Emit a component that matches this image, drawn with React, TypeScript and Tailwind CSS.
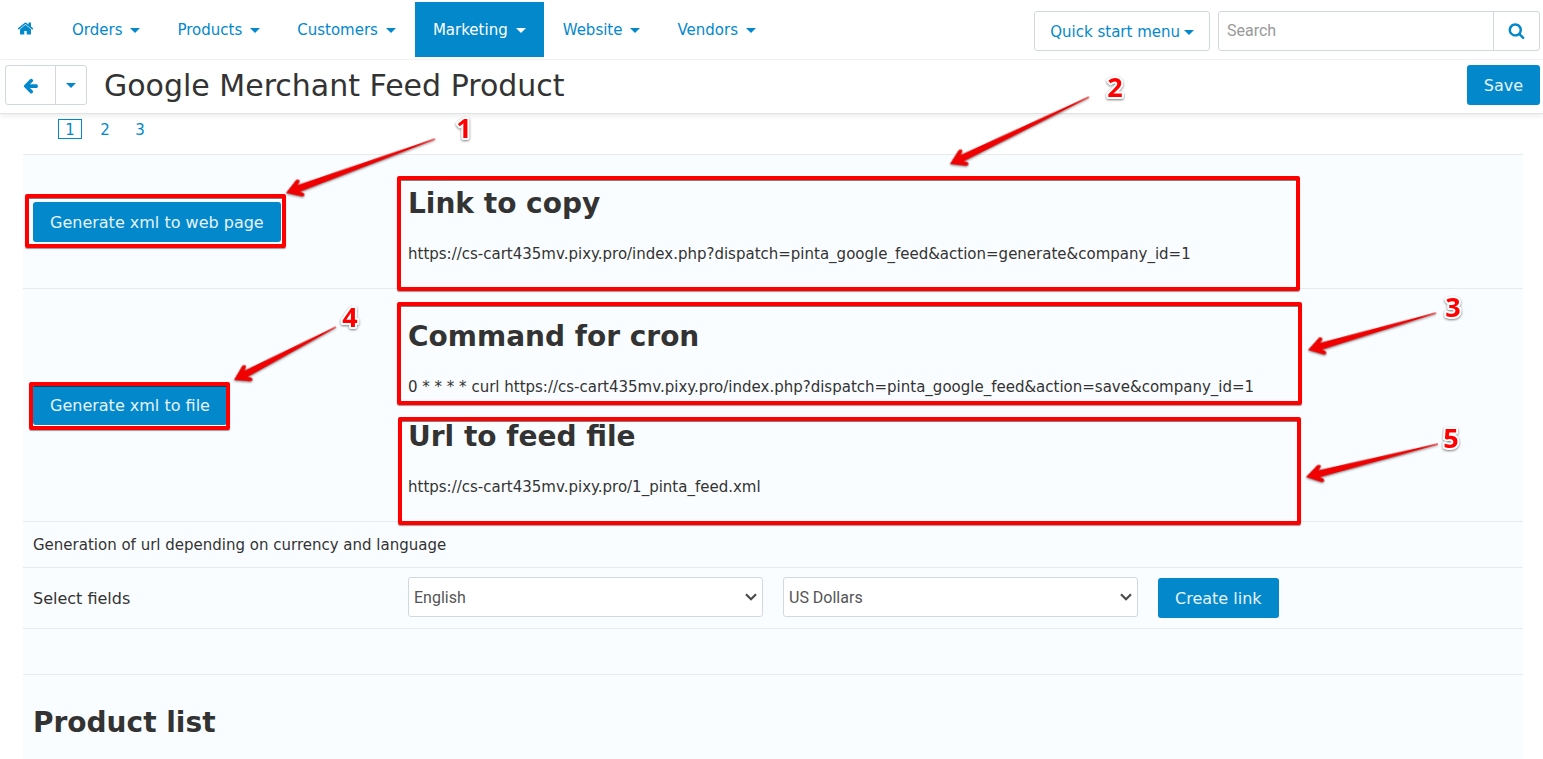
import type { ReactNode } from "react";

const ICONS = {
  home: "M1472 992v480q0 26-19 45t-45 19h-384v-384h-256v384h-384q-26 0-45-19t-19-45v-480q0-1 .5-3t.5-3l575-474 575 474q1 2 1 6zm223-69l-62 74q-8 9-21 11h-3q-13 0-21-7l-692-577-692 577q-12 8-24 7-13-2-21-11l-62-74q-8-10-7-23.5t11-21.5l719-599q32-26 76-26t76 26l244 204v-195q0-14 9-23t23-9h192q14 0 23 9t9 23v408l219 182q10 8 11 21.5t-7 23.5z",
  back: "M1664 896v128q0 53-32.5 90.5t-84.5 37.5h-704l293 294q38 36 38 90t-38 90l-75 76q-37 37-90 37-52 0-91-37l-651-652q-37-37-37-90 0-52 37-91l651-650q38-38 91-38 52 0 90 38l75 74q38 38 38 91t-38 91l-293 293h704q52 0 84.5 37.5t32.5 90.5z",
  search:
    "M1216 832q0-185-131.5-316.5t-316.5-131.5-316.5 131.5-131.5 316.5 131.5 316.5 316.5 131.5 316.5-131.5 131.5-316.5zm512 832q0 52-38 90t-90 38q-54 0-90-38l-343-342q-179 124-399 124-143 0-273.5-55.5t-225-150-150-225-55.5-273.5 55.5-273.5 150-225 225-150 273.5-55.5 273.5 55.5 225 150 150 225 55.5 273.5q0 220-124 399l343 343q37 37 37 90z",
};

function Icon({ d }: { d: string }) {
  return (
    <svg viewBox="0 0 1792 1792" className="size-[17px] fill-current" aria-hidden="true">
      <path d={d} />
    </svg>
  );
}

function Caret() {
  return (
    <svg viewBox="0 0 10 5" className="h-[5px] w-[10px] fill-current" aria-hidden="true">
      <path d="M0 0h10L5 5z" />
    </svg>
  );
}

const MENU = ["Orders", "Products", "Customers", "Marketing", "Website", "Vendors"];

function TopBar() {
  return (
    <header className="flex h-[60px] items-start justify-between border-b border-[#f2f4f5] pr-[3px]">
      <nav className="flex gap-px pt-[2px] text-[15px] text-[#0388cc]">
        <a href="#home" aria-label="Home" className="flex h-[55px] items-center pr-[19px] pb-[2px] pl-[17px]">
          <Icon d={ICONS.home} />
        </a>
        {MENU.map((item) => (
          <a
            key={item}
            href={"#" + item.toLowerCase()}
            className={
              item === "Marketing"
                ? "flex h-[55px] items-center gap-2 bg-[#0388cc] px-[18px] pt-[2px] text-white"
                : "flex h-[55px] items-center gap-2 px-[18px] pt-[2px]"
            }
          >
            {item}
            <Caret />
          </a>
        ))}
      </nav>
      <div className="flex gap-2 pt-[11px]">
        <button
          type="button"
          className="flex h-10 items-center gap-1 rounded-[3px] border border-[#d0d8e0] px-[15px] pt-[2px] text-[15px] text-[#0388cc]"
        >
          Quick start menu
          <Caret />
        </button>
        <form className="flex h-10 w-[322px] rounded-[3px] border border-[#d0d8e0]" role="search">
          <input
            type="search"
            aria-label="Search"
            placeholder="Search"
            className="min-w-0 flex-1 px-2 font-['Roboto',sans-serif] text-base outline-none placeholder:text-[#999999]"
          />
          <button
            type="button"
            aria-label="Submit search"
            className="flex w-[46px] items-center justify-center border-l border-[#d0d8e0] pb-[2px] text-[#0388cc]"
          >
            <Icon d={ICONS.search} />
          </button>
        </form>
      </div>
    </header>
  );
}

function PrimaryButton({ children }: { children: ReactNode }) {
  return (
    <button
      type="button"
      className="h-10 rounded-[3px] bg-[#0388cc] px-[17px] pt-[2px] text-base whitespace-nowrap text-[#e6f3fa]"
    >
      {children}
    </button>
  );
}

function TitleBar() {
  return (
    <div className="flex h-[54px] items-center justify-between border-b border-[#e0e3e3] pr-[3px] pb-[3px] pl-[5px] shadow-[0_2px_5px_rgba(0,0,0,0.08)]">
      <div className="flex items-center">
        <div className="flex h-10 rounded-[3px] border border-[#d0d8e0] text-[#0388cc]">
          <button type="button" aria-label="Back" className="flex w-[49px] items-center justify-center">
            <Icon d={ICONS.back} />
          </button>
          <button
            type="button"
            aria-label="More destinations"
            className="flex w-[31px] items-center justify-center border-l border-[#d0d8e0]"
          >
            <Caret />
          </button>
        </div>
        <h1 className="pt-[2px] pl-[17px] text-[30px] leading-10">Google Merchant Feed Product</h1>
      </div>
      <PrimaryButton>Save</PrimaryButton>
    </div>
  );
}

function SelectBox({ label, options }: { label: string; options: string[] }) {
  return (
    <div className="grid items-center pb-[2px]">
      <select
        aria-label={label}
        className="col-start-1 row-start-1 h-10 w-full appearance-none rounded-[3px] border border-[#d0d8e0] bg-white px-[5px] pt-[2px] font-['Roboto',sans-serif] text-base text-[#555555]"
      >
        {options.map((option) => (
          <option key={option}>{option}</option>
        ))}
      </select>
      <svg
        viewBox="0 0 12 8"
        className="pointer-events-none col-start-1 row-start-1 mr-[6px] h-2 w-3 justify-self-end"
        aria-hidden="true"
      >
        <path d="M1 1.2l5 5 5-5" fill="none" stroke="#4a4a4a" strokeWidth="2.2" />
      </svg>
    </div>
  );
}

function Snippet({ title, children }: { title: string; children: ReactNode }) {
  return (
    <section>
      <h2 className="text-[28px] leading-10 font-bold">{title}</h2>
      <p className="mt-5 text-[15px] leading-5 whitespace-nowrap">{children}</p>
    </section>
  );
}

function FeedTable() {
  return (
    <table className="w-full table-fixed border-collapse bg-[#fafdff] [&_td]:px-[10px] [&_tr]:border-t [&_tr]:border-[#e8ebed]">
      <tbody>
        <tr className="h-[134px]">
          <td>
            <PrimaryButton>Generate xml to web page</PrimaryButton>
          </td>
          <td colSpan={3}>
            <div className="pt-1">
              <Snippet title="Link to copy">
                https://cs-cart435mv.pixy.pro/index.php?dispatch=pinta_google_feed&amp;action=generate&amp;company_id=1
              </Snippet>
            </div>
          </td>
        </tr>
        <tr className="h-[233px]">
          <td>
            <PrimaryButton>Generate xml to file</PrimaryButton>
          </td>
          <td colSpan={3}>
            <div className="flex flex-col gap-5 pt-1">
              <Snippet title="Command for cron">
                0 * * * * curl https://cs-cart435mv.pixy.pro/index.php?dispatch=pinta_google_feed&amp;action=save&amp;company_id=1
              </Snippet>
              <Snippet title="Url to feed file">https://cs-cart435mv.pixy.pro/1_pinta_feed.xml</Snippet>
            </div>
          </td>
        </tr>
        <tr className="h-[46px]">
          <td colSpan={4} className="text-[15px] leading-5">
            Generation of url depending on currency and language
          </td>
        </tr>
        <tr className="h-[61px]">
          <td className="pt-[2px] text-base">Select fields</td>
          <td>
            <SelectBox label="Language" options={["English", "Russian"]} />
          </td>
          <td>
            <SelectBox label="Currency" options={["US Dollars", "Euro"]} />
          </td>
          <td>
            <PrimaryButton>Create link</PrimaryButton>
          </td>
        </tr>
        <tr className="h-[46px]">
          <td colSpan={4} />
        </tr>
        <tr className="h-[84px]">
          <td colSpan={4}>
            <h2 className="pt-3 text-[28px] leading-10 font-bold">Product list</h2>
          </td>
        </tr>
      </tbody>
    </table>
  );
}

const ARROWS = [
  { tip: [286, 193], tail: [435, 139] },
  { tip: [950, 164], tail: [1089, 97] },
  { tip: [1308, 350], tail: [1436, 313] },
  { tip: [234, 380], tail: [336, 327] },
  { tip: [1306, 477], tail: [1438, 444] },
];

const MARKS = [
  { text: "1", x: 464, y: 138 },
  { text: "2", x: 1115, y: 97 },
  { text: "3", x: 1453, y: 317 },
  { text: "4", x: 350, y: 327 },
  { text: "5", x: 1451, y: 448 },
];

const HIGHLIGHTS = [
  "left-[25px] top-[194px] w-[261px] h-[54px]",
  "left-[397px] top-[176px] w-[903px] h-[115px]",
  "left-[397px] top-[302px] w-[905px] h-[103px]",
  "left-[29px] top-[382px] w-[201px] h-[48px]",
  "left-[398px] top-[417px] w-[903px] h-[108px]",
];

function Annotations() {
  return (
    <div className="pointer-events-none absolute inset-0">
      {HIGHLIGHTS.map((place) => (
        <div
          key={place}
          className={
            "absolute rounded-[2px] border-4 border-[#ff0000] shadow-[0_1px_1px_rgba(0,0,0,0.4),inset_0_1px_0_rgba(0,0,0,0.5)] " +
            place
          }
        />
      ))}
      <svg className="absolute inset-0 size-full overflow-visible" aria-hidden="true">
        <g fill="#f00000" className="drop-shadow-[0_1px_1px_rgba(0,0,0,0.5)]">
          {ARROWS.map(({ tip, tail }) => {
            const dx = tail[0] - tip[0];
            const dy = tail[1] - tip[1];
            const length = Math.hypot(dx, dy);
            const angle = (Math.atan2(dy, dx) * 180) / Math.PI;
            return (
              <path
                key={tip[0]}
                transform={`translate(${tip[0]} ${tip[1]}) rotate(${angle})`}
                d={`M0 0L14-8.8Q18-9 16.500-6L13.500-3.500L${length}-.6V.6L13.500 3.500L16.500 6Q18 9 14 8.800Z`}
              />
            );
          })}
        </g>
        <g
          fill="#ff0000"
          stroke="#ffffff"
          strokeWidth="4"
          strokeLinejoin="round"
          paintOrder="stroke"
          textAnchor="middle"
          fontFamily="'Open Sans', 'Noto Sans', sans-serif"
          fontWeight="700"
          className="text-[27px] drop-shadow-[0_1px_1px_rgba(0,0,0,0.5)]"
        >
          {MARKS.map((mark) => (
            <text key={mark.text} x={mark.x} y={mark.y}>
              {mark.text}
            </text>
          ))}
        </g>
      </svg>
    </div>
  );
}

export default function App() {
  return (
    <div className="relative bg-white font-['Verdana','DejaVu_Sans',sans-serif] text-[#333333]">
      <TopBar />
      <TitleBar />
      <main className="pr-5 pl-[23px]">
        <nav aria-label="Pages" className="flex h-10 items-start gap-[11px] pt-[5px] pl-[35px] text-[15px] text-[#0388cc]">
          <span className="flex h-5 w-6 items-center justify-center border border-[#0388cc] pt-[2px]" aria-current="page">
            1
          </span>
          <a href="#page-2" className="flex h-5 w-6 items-center justify-center pt-[2px]">
            2
          </a>
          <a href="#page-3" className="flex h-5 w-6 items-center justify-center pt-[2px]">
            3
          </a>
        </nav>
        <FeedTable />
      </main>
      <Annotations />
    </div>
  );
}
